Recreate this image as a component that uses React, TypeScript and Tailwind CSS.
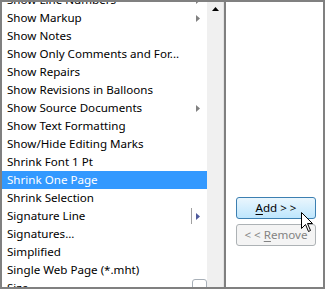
import { FC } from 'react';

interface Row {
  label: string;
  arrow?: boolean;
  split?: boolean;
  selected?: boolean;
}

const rows: Row[] = [
  { label: 'Show Line Numbers', arrow: true },
  { label: 'Show Markup', arrow: true },
  { label: 'Show Notes' },
  { label: 'Show Only Comments and For...' },
  { label: 'Show Repairs' },
  { label: 'Show Revisions in Balloons' },
  { label: 'Show Source Documents', arrow: true },
  { label: 'Show Text Formatting' },
  { label: 'Show/Hide Editing Marks' },
  { label: 'Shrink Font 1 Pt' },
  { label: 'Shrink One Page', selected: true },
  { label: 'Shrink Selection' },
  { label: 'Signature Line', split: true },
  { label: 'Signatures...' },
  { label: 'Simplified' },
  { label: 'Single Web Page (*.mht)' },
  { label: 'Size' },
];

const Arrow: FC<{ color: string }> = ({ color }) => (
  <svg width="4" height="7" viewBox="0 0 4 7" className="shrink-0">
    <path d="M0 0 L4 3.5 L0 7 Z" fill={color} />
  </svg>
);

const ListRow: FC<{ row: Row }> = ({ row }) => (
  <div
    className={`flex h-[18px] shrink-0 items-center pl-[5px] pr-[7px] ${
      row.selected ? 'bg-[#3399ff] text-white' : 'text-black'
    }`}
  >
    <span className="flex-1 whitespace-nowrap">{row.label}</span>
    {row.split && <div className="mr-[4px] h-[16px] w-px bg-[#a0a0a0]" />}
    {row.arrow && <Arrow color="#808080" />}
    {row.split && <Arrow color="#4f5a9c" />}
  </div>
);

const App: FC = () => {
  return (
    <div
      className="flex h-[289px] w-[325px] overflow-hidden border-2 border-[#808080] bg-white text-[11.6px] leading-none"
      style={{ fontFamily: '"Noto Sans", "Segoe UI", sans-serif' }}
    >
      <div className="relative flex w-[205px] shrink-0 flex-col overflow-hidden">
        <div className="-mt-[11px] flex flex-col">
          {rows.map((row) => (
            <ListRow key={row.label} row={row} />
          ))}
        </div>
        <div className="absolute bottom-[-4px] left-[190px] h-[12px] w-[15px] rounded-[3px] border border-[#a8b0b8]" />
      </div>

      <div className="flex w-[17px] shrink-0 flex-col items-center border-r border-[#e3e3e3] bg-[#f0f0f0] pt-[5px]">
        <svg width="7" height="4" viewBox="0 0 7 4">
          <path d="M3.5 0 L7 4 L0 4 Z" fill="#000" />
        </svg>
      </div>

      <div className="w-[2px] shrink-0 bg-[#808080]" />

      <div className="relative flex flex-1 flex-col gap-[5px] pl-[10px] pt-[195px]">
        <button className="h-[22px] w-[80px] rounded-[3px] border border-[#3c7fb1] bg-gradient-to-b from-[#eaf6fd] to-[#bee6fd] text-black">
          <span className="underline underline-offset-2">A</span>dd &gt; &gt;
        </button>
        <button className="h-[22px] w-[80px] rounded-[3px] border border-[#adb2b5] bg-[#f4f4f4] text-[#838383]">
          &lt; &lt; <span className="underline underline-offset-2">R</span>emove
        </button>
        <svg
          width="13"
          height="21"
          viewBox="0 0 13 21"
          className="absolute left-[75px] top-[210px]"
        >
          <path
            d="M0.5 0.5 L0.5 16.5 L4.5 12.5 L7.5 19.5 L9.5 18.5 L6.5 11.5 L11.5 11.5 Z"
            fill="#fff"
            stroke="#000"
            strokeWidth="1"
            strokeLinejoin="miter"
          />
        </svg>
      </div>
    </div>
  );
};

export default App;
